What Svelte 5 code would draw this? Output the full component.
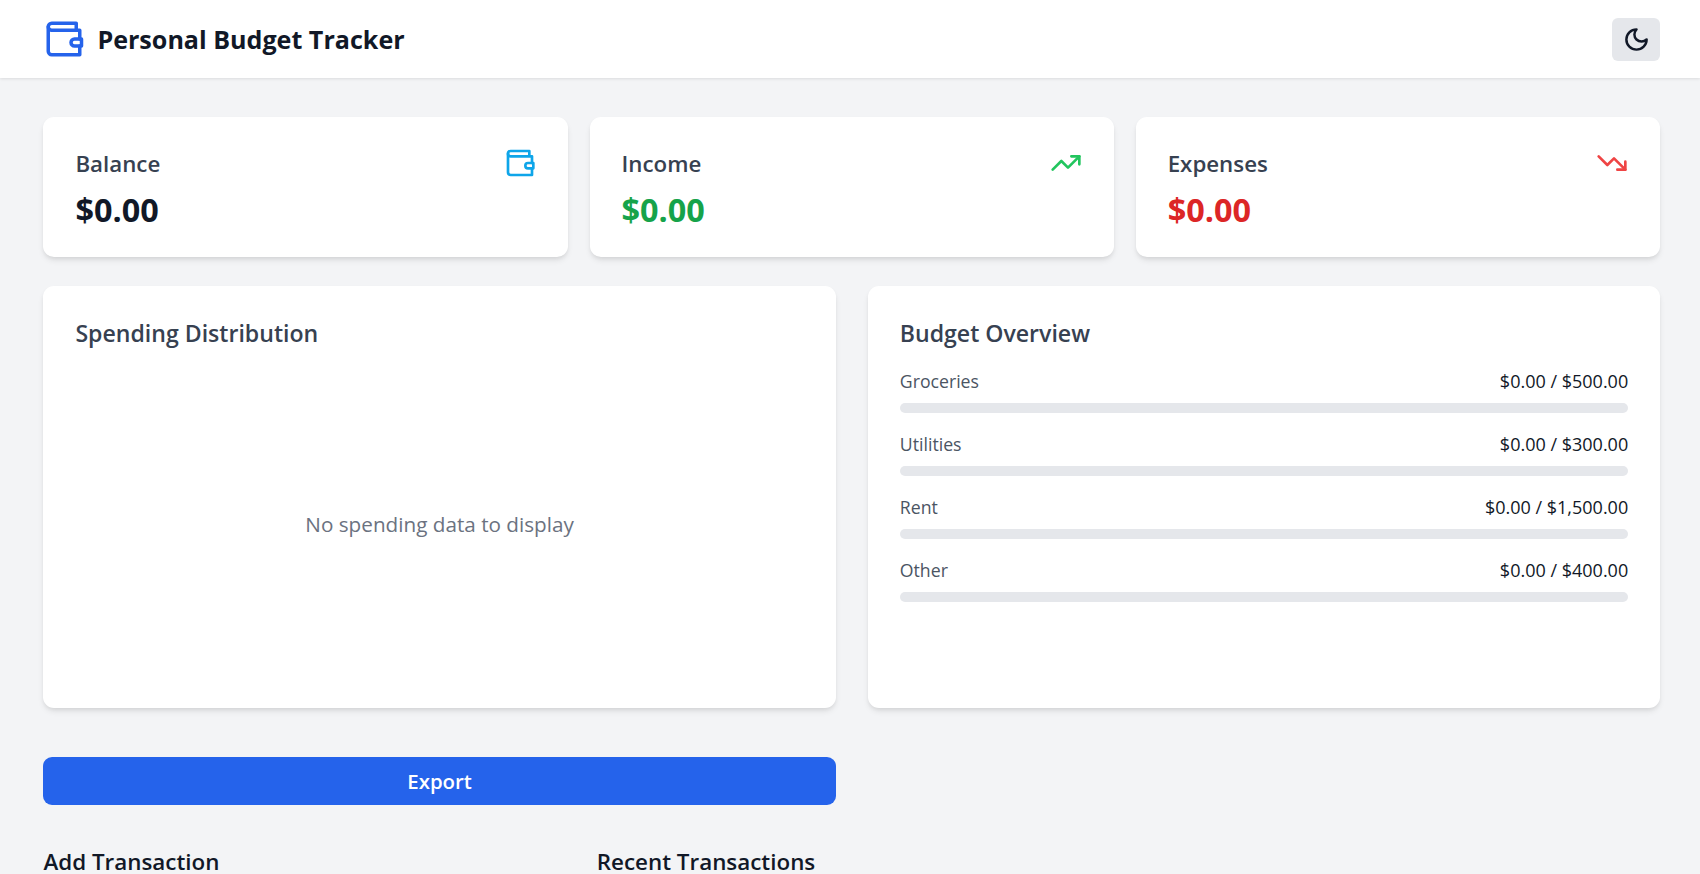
<script>
  const stats = [
    { label: "Balance", value: "$0.00", tone: "neutral" },
    { label: "Income", value: "$0.00", tone: "up" },
    { label: "Expenses", value: "$0.00", tone: "down" },
  ];

  const budgets = [
    { name: "Groceries", spent: "$0.00", limit: "$500.00" },
    { name: "Utilities", spent: "$0.00", limit: "$300.00" },
    { name: "Rent", spent: "$0.00", limit: "$1,500.00" },
    { name: "Other", spent: "$0.00", limit: "$400.00" },
  ];
</script>

{#snippet wallet(size)}
  <svg width={size} height={size} viewBox="0 0 24 24" fill="none" stroke="currentColor" stroke-width="2" stroke-linecap="round" stroke-linejoin="round">
    <path d="M21 12V7H5a2 2 0 0 1 0-4h14v4" />
    <path d="M3 5v14a2 2 0 0 0 2 2h16v-5" />
    <path d="M18 12a2 2 0 0 0 0 4h4v-4Z" />
  </svg>
{/snippet}

<div class="page">
  <header>
    <div class="brand">
      <span class="logo">{@render wallet(42)}</span>
      <h1>Personal Budget Tracker</h1>
    </div>
    <button class="theme" aria-label="Toggle theme">
      <svg width="27" height="27" viewBox="0 0 24 24" fill="none" stroke="currentColor" stroke-width="2.2" stroke-linecap="round" stroke-linejoin="round">
        <path d="M12 3a6 6 0 0 0 9 9 9 9 0 1 1-9-9Z" />
      </svg>
    </button>
  </header>

  <main>
    <section class="stats">
      {#each stats as s}
        <div class="card stat">
          <div class="stat-top">
            <span class="stat-label">{s.label}</span>
            <span class="stat-icon {s.tone}">
              {#if s.tone === "neutral"}
                {@render wallet(32)}
              {:else if s.tone === "up"}
                <svg width="32" height="32" viewBox="0 0 24 24" fill="none" stroke="currentColor" stroke-width="2" stroke-linecap="round" stroke-linejoin="round">
                  <polyline points="22 7 13.5 15.5 8.5 10.5 2 17" />
                  <polyline points="16 7 22 7 22 13" />
                </svg>
              {:else}
                <svg width="32" height="32" viewBox="0 0 24 24" fill="none" stroke="currentColor" stroke-width="2" stroke-linecap="round" stroke-linejoin="round">
                  <polyline points="22 17 13.5 8.5 8.5 13.5 2 7" />
                  <polyline points="16 17 22 17 22 11" />
                </svg>
              {/if}
            </span>
          </div>
          <div class="stat-value {s.tone}">{s.value}</div>
        </div>
      {/each}
    </section>

    <section class="charts">
      <div class="card panel">
        <h2>Spending Distribution</h2>
        <div class="empty">No spending data to display</div>
      </div>
      <div class="card panel">
        <h2>Budget Overview</h2>
        <div class="budgets">
          {#each budgets as b}
            <div class="budget">
              <div class="budget-row">
                <span class="budget-name">{b.name}</span>
                <span class="budget-amount">{b.spent} / {b.limit}</span>
              </div>
              <div class="track"></div>
            </div>
          {/each}
        </div>
      </div>
    </section>

    <section class="actions">
      <button class="export">Export</button>
    </section>

    <section class="lower">
      <h3>Add Transaction</h3>
      <h3 class="wide">Recent Transactions</h3>
    </section>
  </main>
</div>

<style>
  :global(html), :global(body) {
    height: 100%;
    overflow: hidden;
  }
  :global(body) {
    background: #f3f4f6;
  }
  .page {
    font-family: "Open Sans", "Noto Sans", sans-serif;
    color: #111827;
    height: 874px;
    overflow: hidden;
    background: #f3f4f6;
  }
  header {
    height: 78px;
    box-sizing: border-box;
    padding: 0 40px 0 43.4px;
    background: #fff;
    box-shadow: 0 1px 3px rgba(0, 0, 0, 0.1);
    display: flex;
    align-items: center;
    justify-content: space-between;
  }
  .brand {
    display: flex;
    align-items: center;
    gap: 12px;
  }
  .logo {
    display: flex;
    color: #2563eb;
  }
  h1 {
    margin: 0;
    font-size: 25.1px;
    font-weight: 700;
    line-height: 32px;
  }
  .theme {
    width: 48px;
    height: 43px;
    border: 0;
    padding: 0;
    border-radius: 6px;
    background: #e5e7eb;
    color: #111827;
    display: flex;
    align-items: center;
    justify-content: center;
  }
  main {
    padding: 39px 39.8px 0 43.4px;
  }
  .card {
    background: #fff;
    border-radius: 11px;
    box-shadow: 0 4px 6px -1px rgba(0, 0, 0, 0.1), 0 2px 4px -1px rgba(0, 0, 0, 0.06);
  }
  .stats {
    display: grid;
    grid-template-columns: repeat(3, 1fr);
    gap: 21.6px;
  }
  .stat {
    height: 140px;
    box-sizing: border-box;
    padding: 31px 32px;
  }
  .stat-top {
    display: flex;
    justify-content: space-between;
    align-items: flex-start;
    height: 32px;
  }
  .stat-label {
    font-size: 22.3px;
    font-weight: 600;
    line-height: 32px;
    color: #374151;
  }
  .stat-icon {
    display: flex;
    margin-top: -1px;
  }
  .stat-icon.neutral { color: #0ea5e9; }
  .stat-icon.up { color: #22c55e; }
  .stat-icon.down { color: #ef4444; }
  .stat-value {
    font-size: 32.4px;
    font-weight: 700;
    line-height: 40px;
    margin-top: 9px;
  }
  .stat-value.up { color: #16a34a; }
  .stat-value.down { color: #dc2626; }
  .charts {
    display: grid;
    grid-template-columns: 1fr 1fr;
    gap: 32px;
    margin-top: 29px;
  }
  .panel {
    height: 422px;
    box-sizing: border-box;
    padding: 32px;
    display: flex;
    flex-direction: column;
  }
  h2 {
    margin: 0;
    font-size: 23.1px;
    font-weight: 600;
    line-height: 30px;
    color: #374151;
  }
  .empty {
    flex: 1;
    display: flex;
    align-items: center;
    justify-content: center;
    padding-top: 24px;
    font-size: 20.7px;
    color: #6b7280;
  }
  .budgets {
    display: flex;
    flex-direction: column;
    gap: 18px;
    margin-top: 20px;
  }
  .budget-row {
    display: flex;
    justify-content: space-between;
    align-items: center;
    height: 26px;
    margin-bottom: 9px;
    font-size: 17.7px;
  }
  .budget-name {
    color: #4b5563;
  }
  .budget-amount {
    font-size: 18px;
  }
  .track {
    height: 10px;
    border-radius: 5px;
    background: #e5e7eb;
  }
  .actions {
    display: grid;
    grid-template-columns: 1fr 1fr;
    gap: 32px;
    margin-top: 49px;
  }
  .export {
    height: 48px;
    border: 0;
    border-radius: 9px;
    background: #2563eb;
    color: #fff;
    font: 600 20.4px "Open Sans", "Noto Sans", sans-serif;
  }
  .lower {
    display: grid;
    grid-template-columns: 1fr 2fr;
    gap: 21.6px;
    margin-top: 41px;
  }
  h3 {
    margin: 0;
    font-size: 22.4px;
    font-weight: 600;
    line-height: 32px;
    color: #111827;
  }
</style>
